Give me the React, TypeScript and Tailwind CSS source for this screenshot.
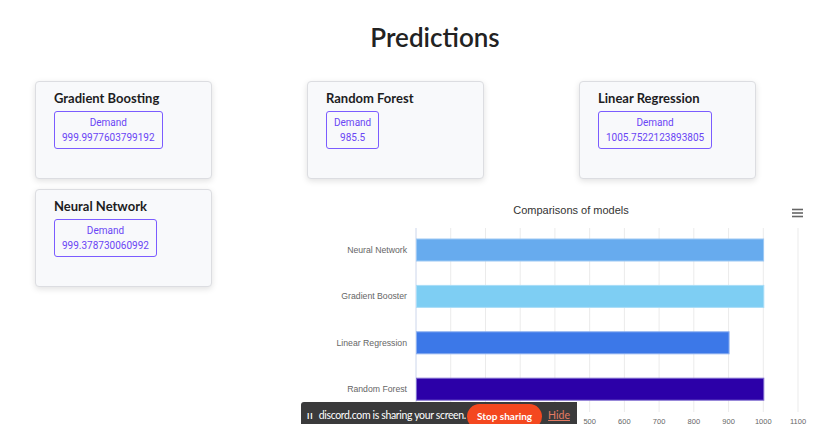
const models = [
  { title: 'Gradient Boosting', value: '999.9977603799192' },
  { title: 'Random Forest', value: '985.5' },
  { title: 'Linear Regression', value: '1005.7522123893805' },
  { title: 'Neural Network', value: '999.378730060992' },
]

const bars = [
  { label: 'Neural Network', value: 999.4, fill: '#67abee', stroke: '#9cc8f4' },
  { label: 'Gradient Booster', value: 1000, fill: '#7ecef3', stroke: '#a9ddf7' },
  { label: 'Linear Regression', value: 900, fill: '#3c78e8', stroke: '#8aaef0' },
  { label: 'Random Forest', value: 1000, fill: '#2c00a8', stroke: '#7f6bd0' },
]

function ModelCard({ title, value }: { title: string; value: string }) {
  return (
    <div className="h-[98px] rounded-[4px] border border-[#dcdde1] bg-[#f8f9fb] px-[18px] pt-[7px] shadow-[0_2px_6px_rgba(0,0,0,0.12)]">
      <h3 className="text-[13px] font-bold leading-[18px] text-[#1d1d1f]">{title}</h3>
      <div className="mt-[4px] inline-flex flex-col items-center rounded-[3px] border border-[#7b5cff] px-[7px] py-[3px] font-['Roboto',sans-serif] text-[10px] leading-[15px] text-[#6a45f5]">
        <span>Demand</span>
        <span>{value}</span>
      </div>
    </div>
  )
}

function Chart() {
  const x0 = 109
  const step = 34.73
  const top = 39
  const bottom = 223
  const ticks = Array.from({ length: 12 }, (_, i) => i)
  return (
    <svg width="520" height="240" className="block overflow-visible" style={{ fontFamily: '"Liberation Sans", Arial, sans-serif' }}>
      <text x="264" y="25" textAnchor="middle" fontSize="11" fill="#333">
        Comparisons of models
      </text>
      {/* export menu */}
      <g stroke="#666" strokeWidth="1.6">
        <line x1="485" y1="20.5" x2="496" y2="20.5" />
        <line x1="485" y1="24" x2="496" y2="24" />
        <line x1="485" y1="27.5" x2="496" y2="27.5" />
      </g>
      {ticks.map((i) => (
        <line
          key={i}
          x1={x0 + i * step}
          x2={x0 + i * step}
          y1={top}
          y2={bottom}
          stroke={i === 0 ? '#ccd6eb' : '#ebebeb'}
          strokeWidth="1"
        />
      ))}
      {bars.map((b, i) => {
        const cy = 61 + i * 46.4
        return (
          <g key={b.label}>
            <rect
              x={x0 + 0.5}
              y={cy - 11}
              width={(b.value / 100) * step}
              height="22"
              fill={b.fill}
              stroke={b.stroke}
              strokeWidth="1"
            />
            <text x="100" y={cy + 3} textAnchor="end" fontSize="8.7" fill="#666">
              {b.label}
            </text>
          </g>
        )
      })}
      {ticks.map((i) => (
        <text key={i} x={x0 + i * step} y="235" textAnchor="middle" fontSize="7.5" fill="#666">
          {i * 100}
        </text>
      ))}
    </svg>
  )
}

export default function App() {
  return (
    <div className="relative h-[424px] overflow-hidden bg-white font-['Lato',sans-serif]">
      <h1 className="pl-[41px] pt-[20px] text-center text-[26px] font-semibold leading-[34px] text-[#222]">Predictions</h1>

      <div className="mt-[27px] grid grid-cols-[177px_177px_177px] gap-x-[95px] gap-y-[10px] pl-[35px]">
        {models.slice(0, 3).map((m) => (
          <ModelCard key={m.title} {...m} />
        ))}
        <ModelCard {...models[3]} />
        <div className="col-span-2">
          <Chart />
        </div>
      </div>

      {/* screen share notice */}
      <div className="absolute left-[301px] top-[402px] flex h-[28px] w-[276px] items-center whitespace-nowrap rounded-tl-[3px] bg-[#3a3a3b] pl-[6px] text-[10.5px] tracking-[-0.35px] text-white">
        <span className="text-[8px] font-bold tracking-[1px]">II</span>
        <span className="ml-[5px]">discord.com is sharing your screen.</span>
        <span className="ml-auto rounded-full bg-[#f4481f] px-[10px] py-[5px] text-[10px] font-bold tracking-normal">Stop sharing</span>
        <span className="ml-[6px] mr-[7px] tracking-normal text-[#e47a63] underline">Hide</span>
      </div>
    </div>
  )
}
